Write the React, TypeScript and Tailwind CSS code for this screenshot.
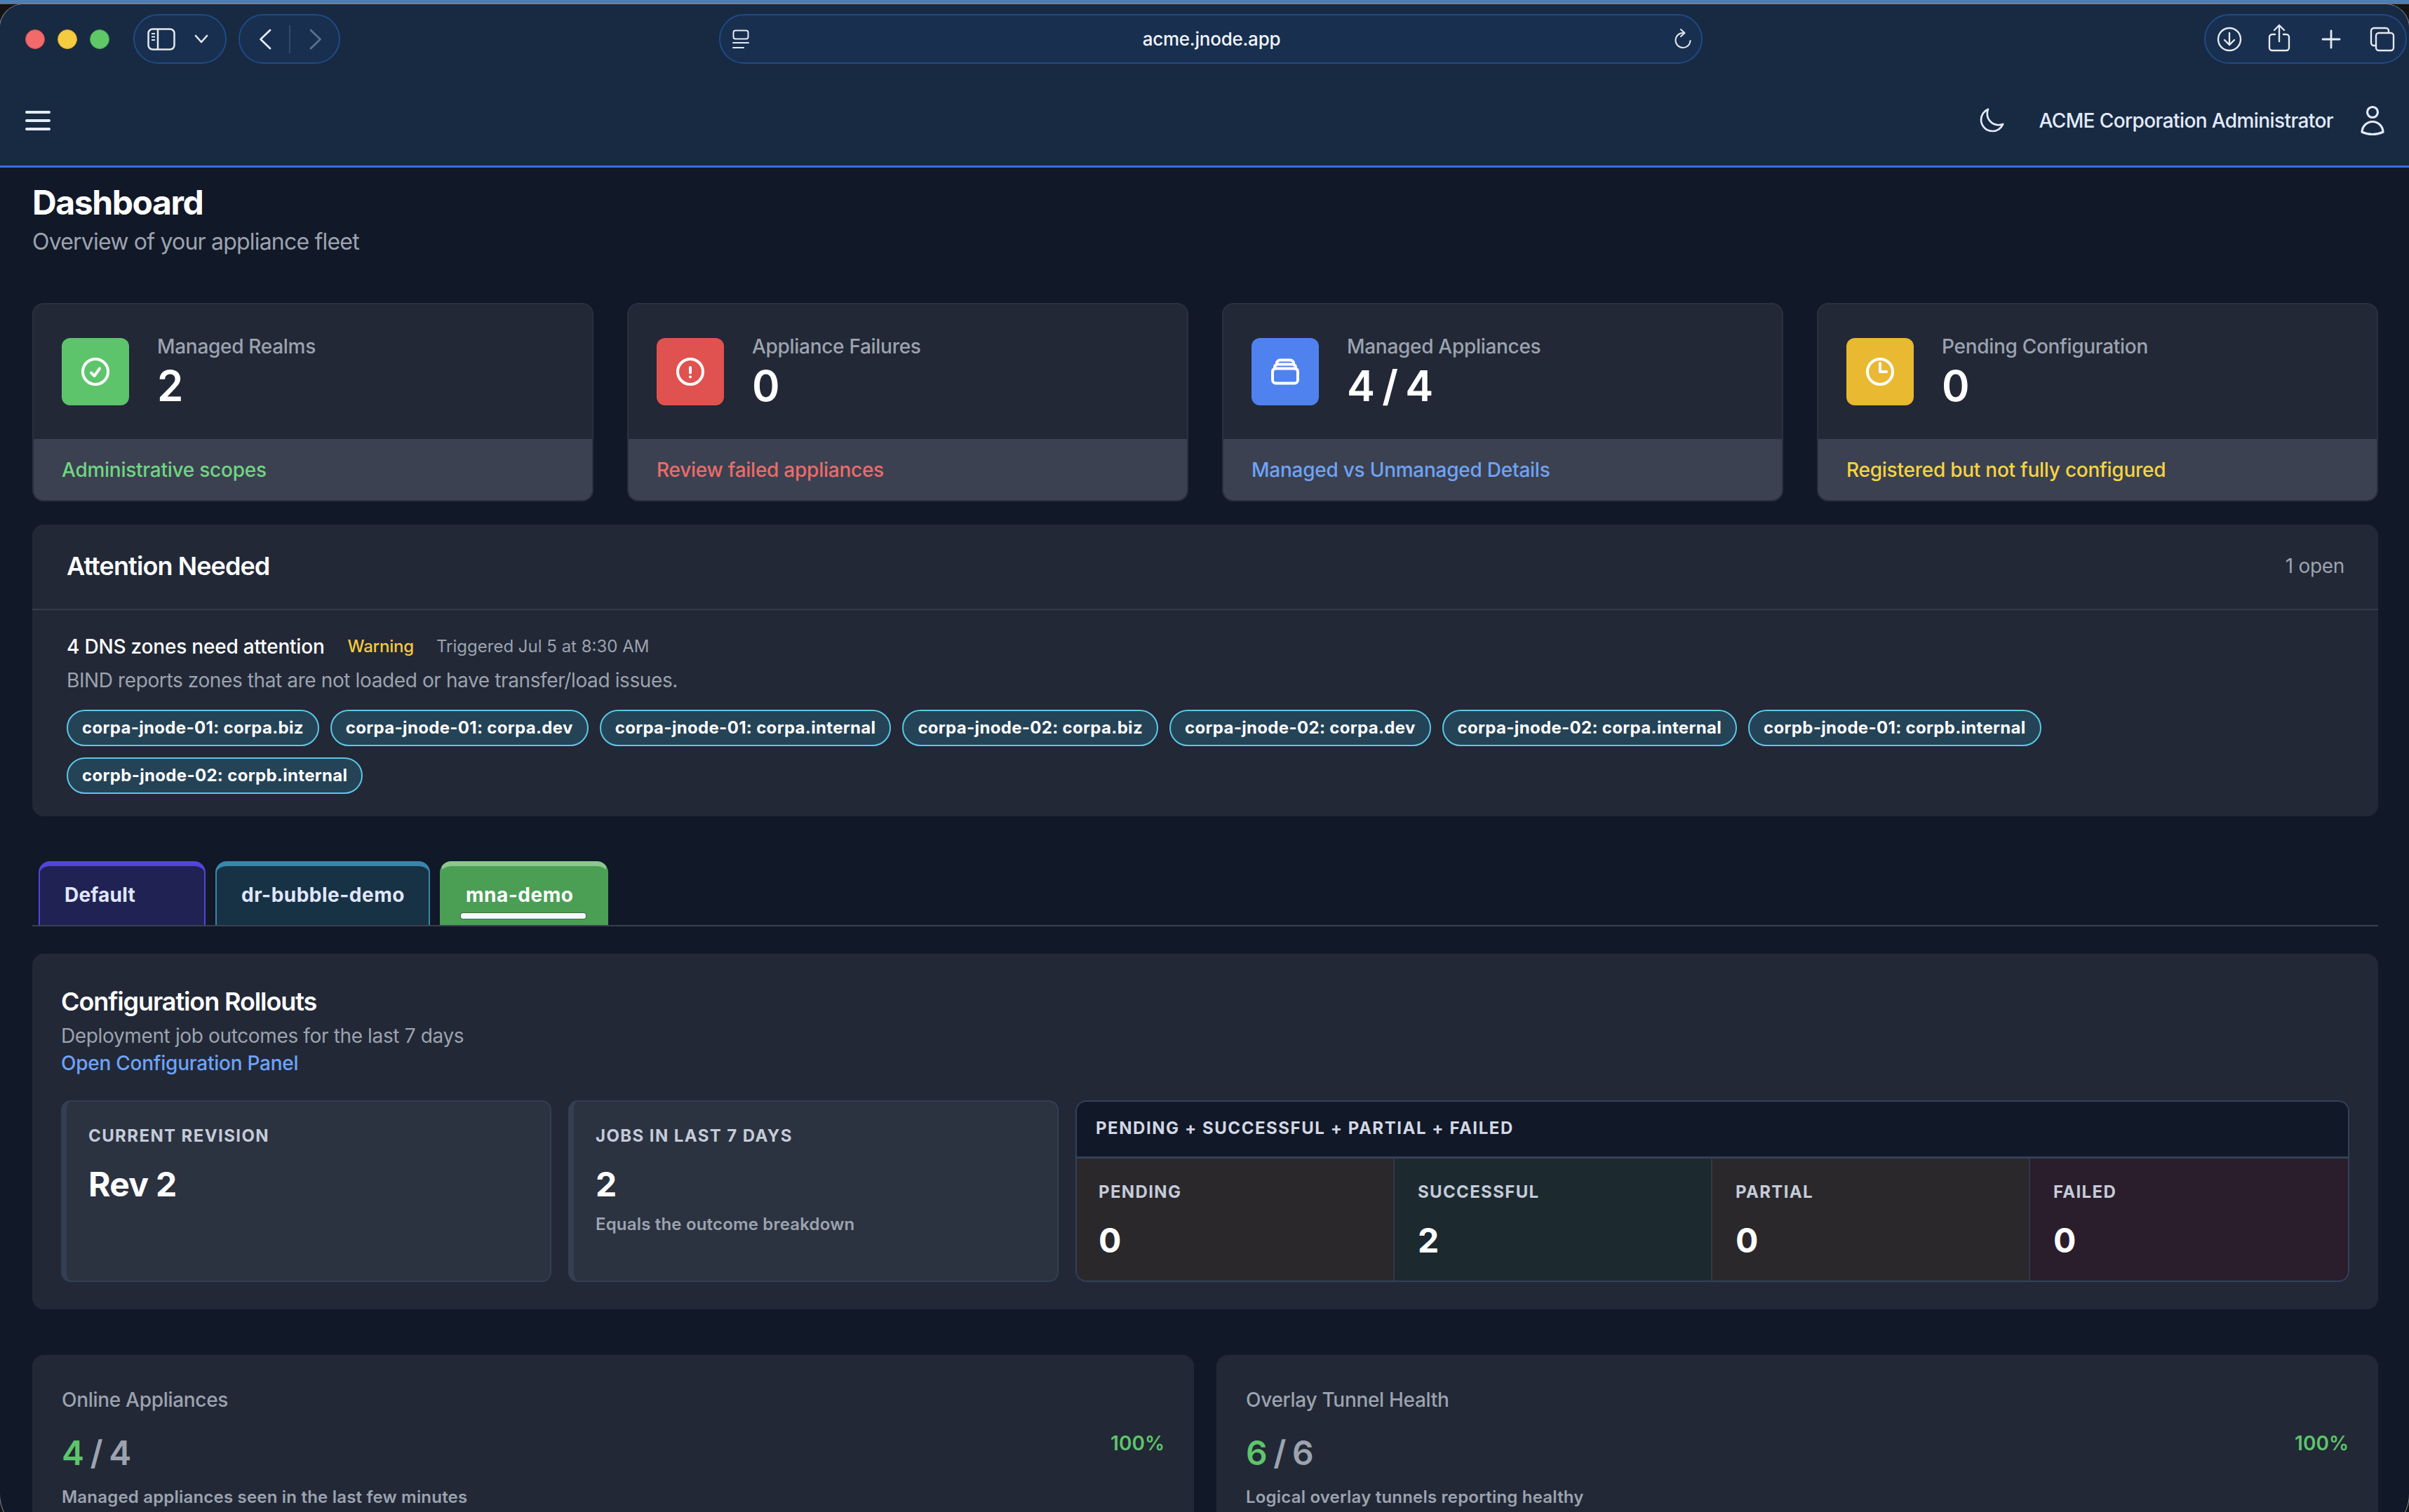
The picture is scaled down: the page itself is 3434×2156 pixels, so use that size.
import React from 'react';

const Hero = ({ d, size = 48, sw = 2, className = '' }: { d: string; size?: number; sw?: number; className?: string }) => (
  <svg width={size} height={size} viewBox="0 0 24 24" fill="none" stroke="currentColor" strokeWidth={sw} strokeLinecap="round" strokeLinejoin="round" className={className}>
    <path d={d} />
  </svg>
);

const ICON = {
  check: 'M9 12.75L11.25 15 15 9.75M21 12a9 9 0 11-18 0 9 9 0 0118 0z',
  alert: 'M12 9v3.75m9-.75a9 9 0 11-18 0 9 9 0 0118 0zm-9 3.75h.008v.008H12v-.008z',
  stack: 'M6 6.878V6a2.25 2.25 0 012.25-2.25h7.5A2.25 2.25 0 0118 6v.878m-12 0c.235-.083.487-.128.75-.128h10.5c.263 0 .515.045.75.128m-12 0A2.25 2.25 0 004.5 9v.878m13.5-3A2.25 2.25 0 0119.5 9v.878m0 0a2.246 2.246 0 00-.75-.128H5.25c-.263 0-.515.045-.75.128m15 0A2.25 2.25 0 0121 12v6a2.25 2.25 0 01-2.25 2.25H5.25A2.25 2.25 0 013 18v-6c0-.98.626-1.813 1.5-2.122',
  clock: 'M12 6v6h4.5m4.5 0a9 9 0 11-18 0 9 9 0 0118 0z',
  moon: 'M21.752 15.002A9.718 9.718 0 0118 15.75c-5.385 0-9.75-4.365-9.75-9.75 0-1.33.266-2.597.748-3.752A9.753 9.753 0 003 11.25C3 16.635 7.365 21 12.75 21a9.753 9.753 0 009.002-5.998z',
  user: 'M15.75 6a3.75 3.75 0 11-7.5 0 3.75 3.75 0 017.5 0zM4.501 20.118a7.5 7.5 0 0114.998 0A17.933 17.933 0 0112 21.75c-2.676 0-5.216-.584-7.499-1.632z',
};

const stats = [
  { label: 'Managed Realms', value: '2', foot: 'Administrative scopes', icon: ICON.check, tile: 'bg-[#5ec46c]', text: 'text-[#6fd681]' },
  { label: 'Appliance Failures', value: '0', foot: 'Review failed appliances', icon: ICON.alert, tile: 'bg-[#e0524f]', text: 'text-[#ec6b69]' },
  { label: 'Managed Appliances', value: '4 / 4', foot: 'Managed vs Unmanaged Details', icon: ICON.stack, tile: 'bg-[#4f82ee]', text: 'text-[#6ea3f7]' },
  { label: 'Pending Configuration', value: '0', foot: 'Registered but not fully configured', icon: ICON.clock, tile: 'bg-[#e9b931]', text: 'text-[#f7d43f]' },
];

const zones = [
  'corpa-jnode-01: corpa.biz',
  'corpa-jnode-01: corpa.dev',
  'corpa-jnode-01: corpa.internal',
  'corpa-jnode-02: corpa.biz',
  'corpa-jnode-02: corpa.dev',
  'corpa-jnode-02: corpa.internal',
  'corpb-jnode-01: corpb.internal',
  'corpb-jnode-02: corpb.internal',
];

const breakdown = [
  { label: 'PENDING', value: '0', bg: 'bg-[#2a282b]' },
  { label: 'SUCCESSFUL', value: '2', bg: 'bg-[#1c2a30]' },
  { label: 'PARTIAL', value: '0', bg: 'bg-[#2a282b]' },
  { label: 'FAILED', value: '0', bg: 'bg-[#2a1e2c]' },
];

const health = [
  { label: 'Online Appliances', a: '4', b: ' / 4', sub: 'Managed appliances seen in the last few minutes' },
  { label: 'Overlay Tunnel Health', a: '6', b: ' / 6', sub: 'Logical overlay tunnels reporting healthy' },
];

const Pill = ({ className, children }: { className: string; children?: React.ReactNode }) => (
  <div className={`h-[71px] rounded-[36px] border-2 border-[#1f4a85] bg-[#182f4f] flex items-center ${className}`}>{children}</div>
);

function Toolbar() {
  return (
    <div className="h-[102px] pt-[14px] flex items-start pl-[36px] text-[#e5e9f0]">
      <div className="flex items-center gap-[18px] h-[71px]">
        <div className="w-[28px] h-[28px] rounded-full bg-[#f26a6a] border border-[#d94c4c]" />
        <div className="w-[28px] h-[28px] rounded-full bg-[#f5cb3f] border border-[#d9a926]" />
        <div className="w-[28px] h-[28px] rounded-full bg-[#60c768] border border-[#45a64e]" />
      </div>
      <Pill className="w-[133px] ml-[34px] pl-[18px]">
        <svg width="40" height="32" viewBox="0 0 40 32" fill="none" stroke="currentColor" strokeWidth="2.5">
          <rect x="1.5" y="1.5" width="37" height="29" rx="6" />
          <path d="M15 2v28" />
          <path d="M6 8h5M6 12.5h5M6 17h5" strokeWidth="1.8" />
        </svg>
        <svg width="20" height="13" viewBox="0 0 20 13" fill="none" stroke="currentColor" strokeWidth="2.6" strokeLinecap="round" strokeLinejoin="round" className="ml-[27px]">
          <path d="M2 2l8 9 8-9" />
        </svg>
      </Pill>
      <Pill className="w-[145px] ml-[17px] relative">
        <svg width="18" height="30" viewBox="0 0 18 30" fill="none" stroke="currentColor" strokeWidth="2.8" strokeLinecap="round" strokeLinejoin="round" className="ml-[27px]">
          <path d="M16 2L2.5 15 16 28" />
        </svg>
        <div className="w-[2px] h-[40px] bg-[#33496a] ml-[25px]" />
        <svg width="18" height="30" viewBox="0 0 18 30" fill="none" stroke="#5d708c" strokeWidth="2.8" strokeLinecap="round" strokeLinejoin="round" className="ml-[27px]">
          <path d="M2 2l13.5 13L2 28" />
        </svg>
      </Pill>
      <Pill className="w-[1402px] ml-[540px] pl-[17px] pr-[13px] justify-between">
        <svg width="24" height="28" viewBox="0 0 24 28" fill="none" stroke="currentColor" strokeWidth="2" strokeLinecap="round">
          <rect x="1.5" y="1.5" width="21" height="12" rx="3" />
          <path d="M1 19h22M1 26h15" />
        </svg>
        <span className="text-[26px] tracking-[-0.25px] font-medium text-[#f1f4f9] leading-[40px] mt-[1px]">acme.jnode.app</span>
        <svg width="26" height="30" viewBox="0 0 26 30" fill="none" stroke="currentColor" strokeWidth="2" strokeLinecap="round" strokeLinejoin="round">
          <path d="M13 6a10.5 10.5 0 1 0 10.5 11" />
          <path d="M10 1l5.5 5L10 11" />
        </svg>
      </Pill>
      <Pill className="w-[289px] ml-[715px] pl-[16px]">
        <svg width="36" height="36" viewBox="0 0 36 36" fill="none" stroke="currentColor" strokeWidth="2.4" strokeLinecap="round" strokeLinejoin="round">
          <circle cx="18" cy="18" r="16" />
          <path d="M18 9v17M11 19l7 7 7-7" />
        </svg>
        <svg width="32" height="40" viewBox="0 0 32 40" fill="none" stroke="currentColor" strokeWidth="2.4" strokeLinecap="round" strokeLinejoin="round" className="ml-[37px] -mt-[3px]">
          <path d="M10 15H6a4 4 0 0 0-4 4v15a4 4 0 0 0 4 4h20a4 4 0 0 0 4-4V19a4 4 0 0 0-4-4h-4" />
          <path d="M16 25V2M9 9l7-7 7 7" />
        </svg>
        <svg width="28" height="28" viewBox="0 0 28 28" fill="none" stroke="currentColor" strokeWidth="2.8" strokeLinecap="round" className="ml-[44px]">
          <path d="M14 2v24M2 14h24" />
        </svg>
        <svg width="36" height="36" viewBox="0 0 36 36" fill="none" stroke="currentColor" strokeWidth="2.4" strokeLinejoin="round" className="ml-[41px]">
          <rect x="9" y="9" width="25" height="25" rx="4" />
          <path d="M9 27H6a4 4 0 0 1-4-4V6a4 4 0 0 1 4-4h17a4 4 0 0 1 4 4v3" />
        </svg>
      </Pill>
    </div>
  );
}

function NavBar() {
  return (
    <div className="h-[128px] flex items-center justify-between pl-[36px] pr-[28px] text-[#e3eafc] border-b-[3px] border-[#3b6ee0] box-content">
      <svg width="36" height="28" viewBox="0 0 36 28" fill="currentColor">
        <rect y="0" width="36" height="4" rx="2" />
        <rect y="12" width="36" height="4" rx="2" />
        <rect y="24" width="36" height="4" rx="2" />
      </svg>
      <div className="flex items-center">
        <Hero d={ICON.moon} size={40} sw={1.6} className="-ml-[2px]" />
        <span className="ml-[47px] text-[28px] tracking-[-0.6px] leading-[40px] font-medium">ACME Corporation Administrator</span>
        <Hero d={ICON.user} size={48} sw={1.6} className="ml-[32px]" />
      </div>
    </div>
  );
}

function StatCard({ s }: { s: (typeof stats)[number] }) {
  return (
    <div className="h-[283px] rounded-[16px] border-2 border-[#2a303d] bg-[#222836] flex flex-col overflow-hidden">
      <div className="h-[192px] pl-[40px] flex items-center gap-[40px]">
        <div className={`w-[96px] h-[96px] rounded-[12px] flex items-center justify-center text-white ${s.tile}`}>
          <Hero d={s.icon} />
        </div>
        <div>
          <div className="text-[28px] tracking-[-0.3px] leading-[40px] font-medium text-[#9ca3af]">{s.label}</div>
          <div className="text-[60px] tracking-[-2.4px] leading-[72px] font-semibold text-white">{s.value}</div>
        </div>
      </div>
      <div className="flex-1 bg-[#3b4150] pl-[40px] flex items-center">
        <span className={`text-[28px] tracking-[-0.25px] leading-[40px] font-medium ${s.text}`}>{s.foot}</span>
      </div>
    </div>
  );
}

function Attention() {
  return (
    <div className="mt-[33px] rounded-[16px] bg-[#222836]">
      <div className="h-[122px] pl-[49px] pr-[48px] flex items-center justify-between border-b-2 border-[#363c4a]">
        <span className="text-[36px] tracking-[-0.9px] leading-[48px] font-semibold text-white -mt-[2px]">Attention Needed</span>
        <span className="text-[28px] tracking-[-0.3px] leading-[40px] text-[#9ca3af] -mt-[2px]">1 open</span>
      </div>
      <div className="pl-[49px] pr-[48px] pt-[32px] pb-[32px]">
        <div className="flex items-center">
          <span className="text-[28px] tracking-[-0.2px] leading-[40px] font-medium text-white">4 DNS zones need attention</span>
          <span className="ml-[33px] text-[24px] tracking-[-0.2px] leading-[40px] font-medium text-[#f5c842]">Warning</span>
          <span className="ml-[32px] text-[24px] leading-[40px] text-[#9ca3af]">Triggered Jul 5 at 8:30 AM</span>
        </div>
        <div className="mt-[8px] text-[28px] tracking-[-0.39px] leading-[40px] text-[#9ca3af]">BIND reports zones that are not loaded or have transfer/load issues.</div>
        <div className="mt-[22px] pr-[20px] flex flex-wrap gap-x-[16px] gap-y-[16px]">
          {zones.map((z) => (
            <span key={z} className="h-[52px] px-[20px] rounded-full border-2 border-[#5cc8e6] bg-[#254357] text-white text-[24px] tracking-[0.32px] leading-[48px] font-bold">{z}</span>
          ))}
        </div>
      </div>
    </div>
  );
}

function Tabs() {
  return (
    <div className="mt-[64px] h-[93px] pl-[9px] flex gap-[14px] border-b-2 border-[#3a404e]">
      <div className="w-[238px] h-[91px] rounded-t-[16px] border-x-2 border-t-[7px] border-[#4f46d8] bg-[#202254] pl-[35px] pt-[21px] text-[28px] tracking-[0.2px] leading-[40px] font-bold text-[#e0e7ff]">Default</div>
      <div className="w-[306px] h-[91px] rounded-t-[16px] border-x-2 border-t-[7px] border-[#3a86a8] bg-[#183245] pl-[35px] pt-[21px] text-[28px] tracking-[0.5px] leading-[40px] font-bold text-[#e0e7ff]">dr-bubble-demo</div>
      <div className="w-[240px] h-[91px] rounded-t-[16px] border-x-2 border-t-[7px] border-x-[#4a9f55] border-t-[#8cc78f] bg-[#4a9f55] pl-[35px] pt-[21px] text-[28px] tracking-[0.5px] leading-[40px] font-bold text-white relative">
        mna-demo
        <div className="absolute left-[28px] bottom-[9px] w-[178px] h-[8px] rounded-[3px] bg-[#f5f8ff] shadow-[0_0_0_1px_#3a6e44]" />
      </div>
    </div>
  );
}

function Tile({ label, value, sub }: { label: string; value: string; sub?: string }) {
  return (
    <div className="w-[699px] rounded-[14px] border-2 border-l-[8px] border-[#333f52] bg-[#2b3240] pl-[31px] pt-[33px]">
      <div className="text-[24px] leading-[32px] font-bold tracking-[1.4px] text-[#c5cbd9]">{label}</div>
      <div className="mt-[25px] text-[48px] tracking-[-0.7px] leading-[56px] font-bold text-white">{value}</div>
      {sub && <div className="mt-[13px] text-[24px] tracking-[0.18px] leading-[32px] font-semibold text-[#9ca3af]">{sub}</div>}
    </div>
  );
}

function Rollouts() {
  return (
    <div className="mt-[39px] rounded-[16px] bg-[#222836] pl-[41px] pr-[41px] pt-[44px] pb-[39px]">
      <div className="text-[36px] tracking-[-1.1px] leading-[48px] font-semibold text-white">Configuration Rollouts</div>
      <div className="mt-[5px] text-[28px] tracking-[-0.36px] leading-[40px] text-[#9ca3af]">Deployment job outcomes for the last 7 days</div>
      <div className="text-[28px] tracking-[-0.25px] leading-[39px] font-medium text-[#6ea3f7]">Open Configuration Panel</div>
      <div className="mt-[33px] h-[259px] flex gap-[24px]">
        <Tile label="CURRENT REVISION" value="Rev 2" />
        <Tile label="JOBS IN LAST 7 DAYS" value="2" sub="Equals the outcome breakdown" />
        <div className="flex-1 rounded-[16px] border-2 border-[#33415a] flex flex-col overflow-hidden">
          <div className="h-[81px] pl-[27px] flex items-center bg-[#111827] border-b-[3px] border-[#33415a] text-[24px] font-bold tracking-[1.55px] text-[#d1d7e4] pb-[2px]">
            PENDING + SUCCESSFUL + PARTIAL + FAILED
          </div>
          <div className="flex-1 grid grid-cols-4">
            {breakdown.map((b, i) => (
              <div key={b.label} className={`${b.bg} pt-[32px] ${i === 0 ? 'pl-[31px]' : 'pl-[33px]'} ${i < 3 ? 'border-r-2 border-[#2f3947]' : ''}`}>
                <div className="text-[24px] leading-[32px] font-bold tracking-[1.35px] text-[#c5cbd9]">{b.label}</div>
                <div className="mt-[25px] text-[48px] leading-[56px] font-bold text-white">{b.value}</div>
              </div>
            ))}
          </div>
        </div>
      </div>
    </div>
  );
}

function Health() {
  return (
    <div className="mt-[65px] grid grid-cols-2 gap-[32px]">
      {health.map((h) => (
        <div key={h.label} className="h-[300px] rounded-[16px] bg-[#222836] pl-[42px] pr-[42px] pt-[44px] flex justify-between">
          <div>
            <div className="text-[28px] tracking-[-0.3px] leading-[40px] font-medium text-[#9ca3af]">{h.label}</div>
            <div className="mt-[28px] text-[48px] tracking-[-1.8px] leading-[56px] font-semibold text-[#9ca3af] whitespace-pre">
              <span className="text-[#5ec46c]">{h.a}</span>{h.b}
            </div>
            <div className="mt-[19px] text-[24px] tracking-[0.2px] leading-[32px] font-semibold text-[#9ca3af]">{h.sub}</div>
          </div>
          <div className="mt-[62px] text-[28px] leading-[40px] font-semibold text-[#5ec46c]">100%</div>
        </div>
      ))}
    </div>
  );
}

export default function App() {
  return (
    <div className="w-[3434px] h-[2156px] overflow-hidden bg-[#141414] font-['Inter',sans-serif]">
      <div className="h-[4px] bg-[#4a80b8]" />
      <div className="h-[2px] bg-[#6b7280]" />
      <div className="w-[3434px] h-[2184px] rounded-t-[34px] rounded-b-[60px] overflow-hidden bg-[#111827] shadow-[0_0_0_1px_#8a8f98]">
        <div className="bg-[#182a42]">
          <Toolbar />
          <NavBar />
        </div>
        <main className="pl-[46px] pr-[44px] pt-[18px]">
          <h1 className="text-[48px] tracking-[-1.4px] leading-[64px] font-bold text-white">Dashboard</h1>
          <p className="text-[32px] tracking-[-0.8px] leading-[48px] text-[#9ca3af]">Overview of your appliance fleet</p>
          <div className="mt-[63px] grid grid-cols-4 gap-[48px]">
            {stats.map((s) => (
              <StatCard key={s.label} s={s} />
            ))}
          </div>
          <Attention />
          <Tabs />
          <Rollouts />
          <Health />
        </main>
      </div>
    </div>
  );
}
